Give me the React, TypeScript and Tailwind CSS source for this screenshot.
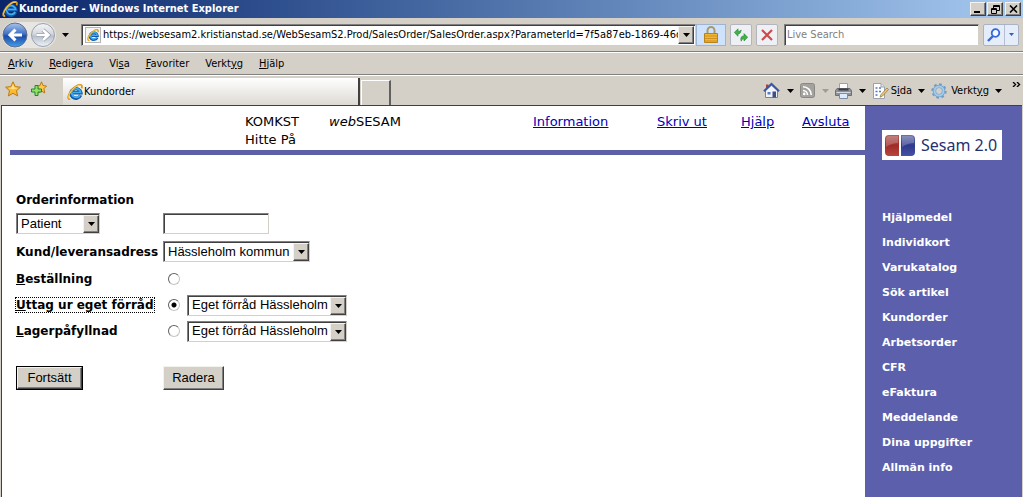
import { useState } from 'react';
import type { ReactNode } from 'react';
import clsx from 'clsx';

const sideLinks = [
  'Hjälpmedel',
  'Individkort',
  'Varukatalog',
  'Sök artikel',
  'Kundorder',
  'Arbetsorder',
  'CFR',
  'eFaktura',
  'Meddelande',
  'Dina uppgifter',
  'Allmän info',
];

// [before, access key, after]
const menuItems = [
  ['', 'A', 'rkiv'],
  ['', 'R', 'edigera'],
  ['Vi', 's', 'a'],
  ['', 'F', 'avoriter'],
  ['Verkt', 'y', 'g'],
  ['', 'H', 'jälp'],
];

const raised =
  'border border-t-[#f4f2ee] border-l-[#f4f2ee] border-r-[#404040] border-b-[#404040] bg-[#d4d0c8] shadow-[inset_-1px_-1px_0_#808080]';
const sunken =
  'border border-t-[#808080] border-l-[#808080] border-r-[#d4d0c8] border-b-[#d4d0c8] shadow-[inset_1px_1px_0_#404040] bg-white';

const Caret = ({ className = 'text-black' }: { className?: string }) => (
  <svg width="7" height="4" viewBox="0 0 7 4" className={clsx('shrink-0', className)} aria-hidden="true">
    <path d="M0 0h7L3.5 4z" fill="currentColor" />
  </svg>
);

const IeLogo = ({ size = 16 }: { size?: number }) => (
  <svg width={size} height={size} viewBox="0 0 16 16" fill="none" className="shrink-0" aria-hidden="true">
    <path d="M13.600 11.200A5 4.800 0 1 1 13.900 8.800H6" stroke="#1259ad" strokeWidth="3.400" />
    <path d="M13.200 11A4.600 4.400 0 1 1 13.700 8.500H6" stroke="#3fb0ee" strokeWidth="1.700" />
    <path d="M3.200 15.200C-.2 15.600 1 10.500 4.800 6 8 2.200 12.600-.2 14.400 1.200c.8.700.6 2 .1 3.200" stroke="#d99a1c" strokeWidth="1.800" />
    <path d="M2.600 14.800C.6 14.200 2 10 5 6.200 8 2.600 12 .6 13.800 1.400" stroke="#ffd75e" strokeWidth=".900" />
  </svg>
);

const TitleBar = () => (
  <header className="flex h-[18px] items-center gap-px bg-linear-to-r from-[#0a246a] to-[#a6caf0] px-0.5">
    <IeLogo />
    <h1 className="flex-1 text-[11px] leading-[18px] font-bold whitespace-nowrap text-white">
      Kundorder - Windows Internet Explorer
    </h1>
    <button aria-label="Minimera" className={clsx('flex h-3.5 w-4 items-end justify-center pb-0.5', raised)}>
      <svg width="8" height="2" aria-hidden="true">
        <path d="M0 0h6v2H0z" />
      </svg>
    </button>
    <button aria-label="Återställ" className={clsx('flex h-3.5 w-4 items-center justify-center', raised)}>
      <svg width="9" height="9" fill="none" stroke="#000" aria-hidden="true">
        <path d="M2.500 3V.5h6v5H6M2 1.500h7M.5 3.500h5v5h-5zM0 4.500h6" />
      </svg>
    </button>
    <button aria-label="Stäng" className={clsx('ml-px flex h-3.5 w-4 items-center justify-center', raised)}>
      <svg width="9" height="8" stroke="#000" strokeWidth="1.600" aria-hidden="true">
        <path d="M1 .5l7 7M8 .5l-7 7" />
      </svg>
    </button>
  </header>
);

const NavBar = () => (
  <div className="flex h-[34px] items-center border-b border-[#808080] pr-1 pl-0.5">
    <div className="flex items-center gap-0.5 rounded-full bg-[#e8e6e2]">
      <button aria-label="Bakåt">
        <svg width="26" height="26" viewBox="0 0 26 26" aria-hidden="true">
          <defs>
            <linearGradient id="back" x1="0" y1="0" x2="0" y2="1">
              <stop offset="0" stopColor="#a9c4ee" />
              <stop offset=".45" stopColor="#4372c4" />
              <stop offset=".55" stopColor="#1d4ba6" />
              <stop offset="1" stopColor="#45a0ee" />
            </linearGradient>
          </defs>
          <circle cx="13" cy="13" r="12" fill="url(#back)" stroke="#5d6f8c" />
          <path d="M20 13H8.500m5-5.300L8 13l5.500 5.300" fill="none" stroke="#fff" strokeWidth="3" />
        </svg>
      </button>
      <button aria-label="Framåt">
        <svg width="26" height="26" viewBox="0 0 26 26" aria-hidden="true">
          <defs>
            <linearGradient id="forward" x1="0" y1="0" x2="0" y2="1">
              <stop offset="0" stopColor="#f4f5f8" />
              <stop offset=".45" stopColor="#d5d9e0" />
              <stop offset=".55" stopColor="#b9c0cc" />
              <stop offset="1" stopColor="#eef3fa" />
            </linearGradient>
          </defs>
          <circle cx="13" cy="13" r="11.500" fill="url(#forward)" stroke="#9aa0aa" />
          <path d="M6.500 13h11.500m-5-5l5.500 5-5.500 5" fill="none" stroke="#8e96a4" strokeWidth="4" />
          <path d="M6.500 13h11.500m-5-5l5.500 5-5.500 5" fill="none" stroke="#fff" strokeWidth="2.600" />
        </svg>
      </button>
    </div>
    <button aria-label="Senaste sidor" className="px-1.5">
      <Caret />
    </button>

    <div className={clsx('ml-1.5 flex h-[22px] flex-1 items-center pr-px pl-[3px]', sunken)}>
      <span className="flex size-4 items-center justify-center border border-[#b4b4b4] bg-[#f4f4f4]">
        <IeLogo size={12} />
      </span>
      <input
        aria-label="Adress"
        className="ml-0.5 min-w-0 flex-1 text-[11px] leading-4 outline-none"
        defaultValue="https://websesam2.kristianstad.se/WebSesamS2.Prod/SalesOrder/SalesOrder.aspx?ParameterId=7f5a87eb-1869-46dc-9a1e"
      />
      <button aria-label="Visa adresser" className={clsx('flex h-[18px] w-4 items-center justify-center', raised)}>
        <Caret />
      </button>
    </div>
    <button
      aria-label="Säkerhetsrapport"
      className="flex h-[22px] w-[30px] items-center justify-center border border-[#9db4d4] bg-[#cfe2fb]"
    >
      <svg width="14" height="17" viewBox="0 0 14 17" aria-hidden="true">
        <path d="M3.500 8V4.500a3.500 3.500 0 0 1 7 0V8" fill="none" stroke="#a89a6c" strokeWidth="2" />
        <path d="M.5 7.500h13v9H.5z" fill="#f2b632" stroke="#b5821c" />
        <path d="M1 10h12M1 12.500h12M1 15h12" stroke="#cf921f" />
      </svg>
    </button>
    <button
      aria-label="Uppdatera"
      className="ml-1 flex size-[22px] items-center justify-center rounded-xs border border-[#b4b4bc] bg-[#eef0f5]"
    >
      <svg width="14" height="14" viewBox="0 0 14 14" aria-hidden="true">
        <path d="M4 .8L.3 4.500 4 8.200V6q2.500.2 3.300-4Q6.200 3.500 4 3.200z" fill="#43b04a" stroke="#1d8a2e" strokeWidth=".600" />
        <path d="M10 5.600l3.700 3.700L10 13v-2.200q-2.500-.2-2.800 2.400Q5.600 8 10 8z" fill="#43b04a" stroke="#1d8a2e" strokeWidth=".600" />
      </svg>
    </button>
    <button
      aria-label="Stopp"
      className="ml-1 flex size-[22px] items-center justify-center rounded-xs border border-[#b4b4bc] bg-[#eef0f5]"
    >
      <svg width="12" height="12" viewBox="0 0 12 12" stroke="#cc4a4a" strokeWidth="2.200" aria-hidden="true">
        <path d="M1 1l10 10M11 1L1 11" />
      </svg>
    </button>
    <input
      aria-label="Sök på webben"
      placeholder="Live Search"
      className={clsx('ml-1.5 h-[22px] w-[195px] px-0.5 text-[11px] leading-4 outline-none placeholder:text-[#808080]', sunken)}
    />
    <div className="ml-1 flex h-[22px] w-9 rounded-xs border border-[#a9b3c6] bg-[#e6edfa]">
      <button aria-label="Sök" className="flex flex-1 items-center justify-center border-r border-[#b5bfd2]">
        <svg width="14" height="14" viewBox="0 0 14 14" fill="none" stroke="#3567d8" aria-hidden="true">
          <circle cx="8.500" cy="5" r="3.800" fill="#f4f8ff" strokeWidth="1.800" />
          <path d="M6 8l-5 5" strokeWidth="2.400" />
        </svg>
      </button>
      <button aria-label="Sökalternativ" className="flex w-[13px] items-center justify-center text-[#2c61b8]">
        <svg width="5" height="3" viewBox="0 0 5 3" aria-hidden="true">
          <path d="M0 0h5L2.500 3z" fill="currentColor" />
        </svg>
      </button>
    </div>
  </div>
);

const MenuBar = () => (
  <nav className="flex h-[23px] items-center gap-4 border-t border-b border-t-white border-b-[#808080] px-2">
    {menuItems.map(([before, key, after]) => (
      <button key={before + key + after} className="text-[11px] leading-4">
        {before}
        <u>{key}</u>
        {after}
      </button>
    ))}
  </nav>
);

const Tool = ({ label, muted, children }: { label: string; muted?: boolean; children: ReactNode }) => (
  <button aria-label={label} className="flex items-center gap-[7px]">
    {children}
    <Caret className={muted ? 'text-[#a09c94]' : 'text-black'} />
  </button>
);

const TabBar = () => (
  <div className="flex h-[30px] items-end border-t border-white">
    <div className="flex items-center gap-2.5 self-center pb-1 pl-[5px]">
      <button aria-label="Favoriter">
        <svg width="16" height="16" viewBox="0 0 16 16" aria-hidden="true">
          <path d="M8 .8l2.200 4.800 5.200.6-3.900 3.500 1.100 5.200L8 12.300l-4.600 2.600 1.100-5.200L.6 6.200l5.200-.6z" fill="#ffb92a" stroke="#b87a14" />
          <path d="M8 3l1.500 3.500L13 7 8 8.500 3 7l3.500-.5z" fill="#ffe08a" />
        </svg>
      </button>
      <button aria-label="Lägg till i Favoriter">
        <svg width="16" height="16" viewBox="0 0 16 16" aria-hidden="true">
          <path d="M10.500.8l1.500 3.700 3.500.5-2.600 2.700.9 4.300-3.300-2-3.300 2 .7-4.300L5.500 5l3.500-.5z" fill="#ffc845" stroke="#b87a14" />
          <path d="M4 4.500h3v3.500h3.500v3H7v3.500H4V11H.5V8H4z" fill="#8fe06a" stroke="#1d8a2a" />
        </svg>
      </button>
    </div>
    <div className="ml-4 flex h-[27px] min-w-0 flex-1 items-center border-r-2 border-[#404040] bg-linear-to-b from-white to-[#dddad3] pl-1">
      <IeLogo />
      <span className="ml-px text-[11px] leading-4">Kundorder</span>
    </div>
    <button
      aria-label="Ny flik"
      className="ml-px h-[25px] w-[30px] border-t border-r-2 border-l border-t-white border-r-[#606060] border-l-white"
    />
    <div className="ml-[372px] flex h-full items-center gap-1.5 pr-0.5">
      <Tool label="Startsida">
        <svg width="17" height="17" viewBox="0 0 17 17" aria-hidden="true">
          <path d="M3 2.500h2.500V6H3z" fill="#a34545" />
          <path d="M2.500 8.500v7h12v-7l-6-5.500z" fill="#f2f4fa" stroke="#7080ac" />
          <path d="M1 9.200L8.500 2l7.500 7.200" fill="none" stroke="#3f56a0" strokeWidth="2.200" />
          <path d="M9.500 9.500h3.500v6H9.500z" fill="#3c4f86" />
          <path d="M4.500 10h3v2.500h-3z" fill="#5a7cc0" />
        </svg>
      </Tool>
      <Tool label="Feeds" muted>
        <svg width="15" height="15" viewBox="0 0 15 15" fill="none" aria-hidden="true">
          <rect x=".5" y=".5" width="14" height="14" rx="2" fill="#a4a29e" stroke="#8a8884" />
          <path d="M3 7.500a4.500 4.500 0 0 1 4.500 4.500M3 3.700a8.300 8.300 0 0 1 8.300 8.300" stroke="#fff" strokeWidth="1.600" />
          <circle cx="4.200" cy="10.900" r="1.300" fill="#fff" />
        </svg>
      </Tool>
      <Tool label="Skriv ut">
        <svg width="17" height="16" viewBox="0 0 17 16" aria-hidden="true">
          <path d="M4.500.5h8V7h-8z" fill="#fff" stroke="#a0a0a4" />
          <path d="M2 5.500h13l1.500 2v5H.5v-5z" fill="#8d9098" stroke="#6c6f77" />
          <path d="M3.500 6.500h10" stroke="#3c3f46" strokeWidth="2" />
          <path d="M1.500 9.500h14" stroke="#d8dae0" />
          <path d="M4.500 10.500h8v5h-8z" fill="#dcecff" stroke="#7a8ca8" />
        </svg>
      </Tool>
      <button className="flex items-center text-[11px] leading-4">
        <svg width="17" height="16" viewBox="0 0 17 16" aria-hidden="true">
          <path d="M1.500.5H9L12.500 4v11.500h-11z" fill="#fff" stroke="#9aa2b2" />
          <path d="M9 .5V4h3.500" fill="#dfe4ee" stroke="#9aa2b2" />
          <path d="M3.500 5h2M7 5h2M3.500 8.500h2M7 8.500h2M3.500 12h2" stroke="#5276b8" strokeWidth="1.500" />
          <path d="M15 5l-6 6.500-1 2.700 2.600-1.200L16.500 6.500z" fill="#ecc878" stroke="#8d7038" strokeWidth=".700" />
        </svg>
        <span className="mr-1.5 ml-0.5">
          S<u>i</u>da
        </span>
        <Caret />
      </button>
      <button className="flex items-center text-[11px] leading-4">
        <svg width="16" height="16" viewBox="0 0 16 16" fill="none" aria-hidden="true">
          <circle cx="8" cy="8" r="6.800" stroke="#6f9cc6" strokeWidth="1.800" strokeDasharray="2.670 2.670" />
          <circle cx="8" cy="8" r="4.600" stroke="#6f9cc6" strokeWidth="3.400" />
          <circle cx="8" cy="8" r="4.500" stroke="#a5cbea" strokeWidth="2" />
        </svg>
        <span className="mr-1.5 ml-1">
          Verkt<u>y</u>g
        </span>
        <Caret />
      </button>
      <button aria-label="Fler verktyg" className="ml-1 self-start pt-1.5">
        <svg width="9" height="5" viewBox="0 0 9 5" fill="none" stroke="#000" strokeWidth="1.400" aria-hidden="true">
          <path d="M1 0l2.500 2.500L1 5M5 0l2.500 2.500L5 5" />
        </svg>
      </button>
    </div>
  </div>
);

interface ClassicSelectProps {
  id?: string;
  label: string;
  options: string[];
  className: string;
}

const ClassicSelect = ({ id, label, options, className }: ClassicSelectProps) => (
  <div className={clsx('relative flex h-[21px]', sunken, className)}>
    <select
      id={id}
      aria-label={label}
      className="w-full appearance-none bg-transparent pr-4 pl-1 font-['Liberation_Sans',Arial,sans-serif] text-[13px] leading-4 outline-none"
    >
      {options.map((option) => (
        <option key={option}>{option}</option>
      ))}
    </select>
    <span
      className={clsx('pointer-events-none absolute top-px right-0 bottom-0 flex w-4 items-center justify-center', raised)}
    >
      <Caret />
    </span>
  </div>
);

interface OrderTypeProps {
  id: string;
  accessKey: string;
  rest: string;
  checked: boolean;
  onSelect: (id: string) => void;
  children?: ReactNode;
}

const OrderType = ({ id, accessKey, rest, checked, onSelect, children }: OrderTypeProps) => (
  <div className="flex h-[26px] items-center">
    <div className="w-[147px] shrink-0 whitespace-nowrap">
      <label
        htmlFor={id}
        className={clsx('font-bold', checked && 'outline-1 outline-dotted outline-black')}
      >
        <u>{accessKey}</u>
        {rest}
      </label>
    </div>
    <div className="flex items-center gap-[7px] pl-[5px]">
      <input
        type="radio"
        id={id}
        name="ordertype"
        checked={checked}
        onChange={() => onSelect(id)}
        className="size-3 appearance-none rounded-full border border-t-[#606060] border-r-[#c8c4bc] border-b-[#c8c4bc] border-l-[#606060] bg-white checked:bg-[radial-gradient(circle,#000_2px,#fff_3px)]"
      />
      {children}
    </div>
  </div>
);

const OrderForm = () => {
  const [orderType, setOrderType] = useState('uttag');

  return (
    <form className="pt-[35px] pl-3.5 text-[12px] leading-4" onSubmit={(e) => e.preventDefault()}>
      <h2 className="leading-5 font-bold">Orderinformation</h2>
      <div className="flex h-[27px] items-center">
        <div className="w-[147px] shrink-0">
          <ClassicSelect label="Sök på" options={['Patient', 'Kund']} className="w-[84px]" />
        </div>
        <input aria-label="Sökvärde" className={clsx('h-[21px] w-[106px] px-1 text-[13px] outline-none', sunken)} />
      </div>
      <div className="flex h-[29px] items-center">
        <label htmlFor="kund" className="w-[147px] shrink-0 font-bold whitespace-nowrap">
          Kund/leveransadress
        </label>
        <ClassicSelect id="kund" label="Kund/leveransadress" options={['Hässleholm kommun']} className="w-[147px]" />
      </div>
      <OrderType id="bestallning" accessKey="B" rest="eställning" checked={orderType === 'bestallning'} onSelect={setOrderType} />
      <OrderType id="uttag" accessKey="U" rest="ttag ur eget förråd" checked={orderType === 'uttag'} onSelect={setOrderType}>
        <ClassicSelect label="Förråd för uttag" options={['Eget förråd Hässleholm']} className="w-40" />
      </OrderType>
      <OrderType id="lager" accessKey="L" rest="agerpåfyllnad" checked={orderType === 'lager'} onSelect={setOrderType}>
        <ClassicSelect label="Förråd för påfyllnad" options={['Eget förråd Hässleholm']} className="w-40" />
      </OrderType>
      <div className="flex pt-[22px] font-['Liberation_Sans',Arial,sans-serif] text-[13px]">
        <div className="w-[147px]">
          <button type="submit" className="border border-black">
            <span className={clsx('flex h-[22px] w-[65px] items-center justify-center', raised)}>Fortsätt</span>
          </button>
        </div>
        <button type="reset" className={clsx('h-6 w-[61px]', raised)}>
          Radera
        </button>
      </div>
    </form>
  );
};

const SideMenu = () => (
  <aside className="w-[157px] shrink-0 bg-[#5b5fac] pt-6 pl-[17px]">
    <div className="flex h-[30px] w-[120px] items-center gap-1.5 bg-white pl-[3px]">
      <svg width="30" height="23" viewBox="0 0 30 23" className="shrink-0" aria-hidden="true">
        <defs>
          <linearGradient id="red" x1="0" y1="0" x2="0" y2="1">
            <stop offset="0" stopColor="#b0605c" />
            <stop offset=".5" stopColor="#a02c28" />
            <stop offset="1" stopColor="#b84540" />
          </linearGradient>
          <linearGradient id="blue" x1="0" y1="0" x2="0" y2="1">
            <stop offset="0" stopColor="#6a72ac" />
            <stop offset=".5" stopColor="#2f3a8c" />
            <stop offset="1" stopColor="#4650a4" />
          </linearGradient>
        </defs>
        <path d="M4 1h10v21H4q-4 0-4-4V5q0-4 4-4z" fill="url(#red)" />
        <path d="M16 1h10q4 0 4 4v13q0 4-4 4H16z" fill="url(#blue)" />
        <path d="M4 2h9v7q-6 0-12 4V5q0-3 3-3zM17 2h9q3 0 3 3v4q-6 0-12 4z" fill="#fff" opacity=".22" />
      </svg>
      <span className="font-['Noto_Sans','Open_Sans',sans-serif] text-[16px] leading-6 whitespace-nowrap text-[#26306f]">
        Sesam 2.0
      </span>
    </div>
    <nav className="mt-[45px]">
      <ul>
        {sideLinks.map((link) => (
          <li key={link} className="flex h-[25px] items-center">
            <a href="#" className="text-[11px] leading-4 font-bold text-white">
              {link}
            </a>
          </li>
        ))}
      </ul>
    </nav>
  </aside>
);

const App = () => {
  return (
    <div className="flex min-h-screen flex-col bg-[#d4d0c8] font-['DejaVu_Sans_Condensed','DejaVu_Sans',sans-serif] text-black">
      <TitleBar />
      <NavBar />
      <MenuBar />
      <TabBar />
      <div className="mr-px ml-px flex flex-1 border-t border-l border-[#404040] bg-white font-['DejaVu_Sans',Verdana,sans-serif]">
        <main className="min-w-0 flex-1">
          <div className="ml-2 flex border-b-5 border-[#5c60a8] pt-[7px] pr-4 pb-px pl-[235px] text-[13px] leading-[18px]">
            <p className="w-[84px]">
              KOMKST
              <br />
              Hitte På
            </p>
            <p>
              <i>web</i>SESAM
            </p>
            <nav className="ml-auto grid grid-cols-[124px_84px_61px_47px] whitespace-nowrap text-[#0000b8] underline">
              <a href="#">Information</a>
              <a href="#">Skriv ut</a>
              <a href="#">Hjälp</a>
              <a href="#">Avsluta</a>
            </nav>
          </div>
          <OrderForm />
        </main>
        <SideMenu />
      </div>
    </div>
  );
};

export default App;
